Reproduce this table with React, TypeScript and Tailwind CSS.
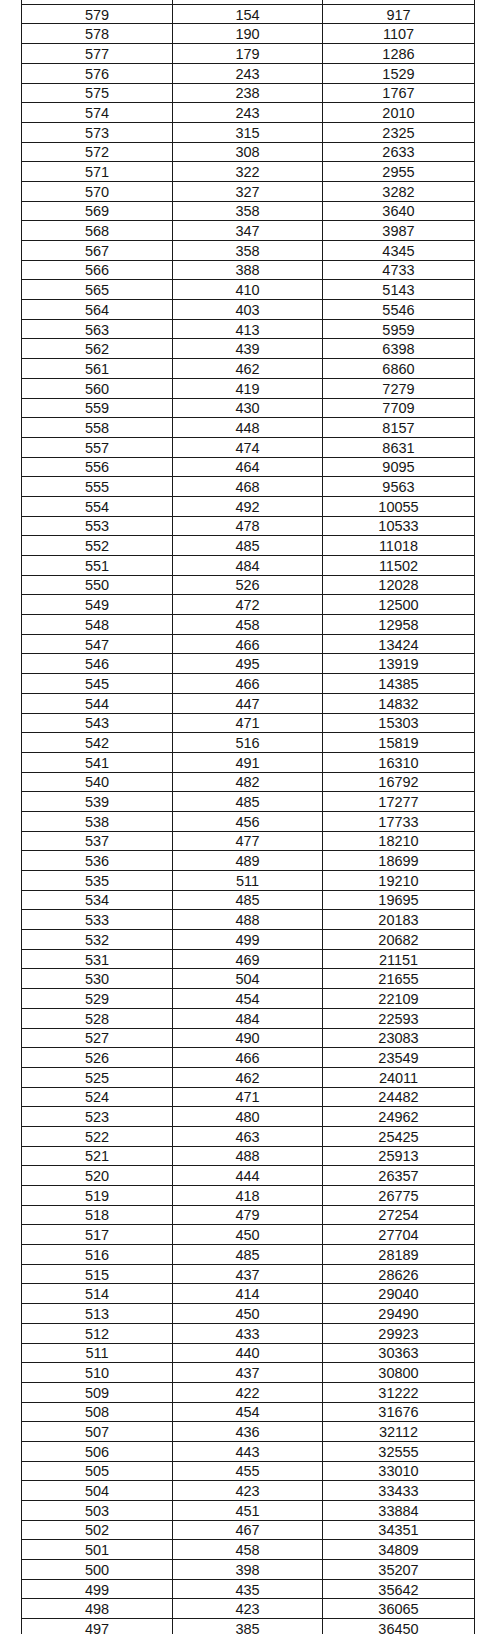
const rows: [number, number, number][] = [
  [580, 161, 763],
  [579, 154, 917],
  [578, 190, 1107],
  [577, 179, 1286],
  [576, 243, 1529],
  [575, 238, 1767],
  [574, 243, 2010],
  [573, 315, 2325],
  [572, 308, 2633],
  [571, 322, 2955],
  [570, 327, 3282],
  [569, 358, 3640],
  [568, 347, 3987],
  [567, 358, 4345],
  [566, 388, 4733],
  [565, 410, 5143],
  [564, 403, 5546],
  [563, 413, 5959],
  [562, 439, 6398],
  [561, 462, 6860],
  [560, 419, 7279],
  [559, 430, 7709],
  [558, 448, 8157],
  [557, 474, 8631],
  [556, 464, 9095],
  [555, 468, 9563],
  [554, 492, 10055],
  [553, 478, 10533],
  [552, 485, 11018],
  [551, 484, 11502],
  [550, 526, 12028],
  [549, 472, 12500],
  [548, 458, 12958],
  [547, 466, 13424],
  [546, 495, 13919],
  [545, 466, 14385],
  [544, 447, 14832],
  [543, 471, 15303],
  [542, 516, 15819],
  [541, 491, 16310],
  [540, 482, 16792],
  [539, 485, 17277],
  [538, 456, 17733],
  [537, 477, 18210],
  [536, 489, 18699],
  [535, 511, 19210],
  [534, 485, 19695],
  [533, 488, 20183],
  [532, 499, 20682],
  [531, 469, 21151],
  [530, 504, 21655],
  [529, 454, 22109],
  [528, 484, 22593],
  [527, 490, 23083],
  [526, 466, 23549],
  [525, 462, 24011],
  [524, 471, 24482],
  [523, 480, 24962],
  [522, 463, 25425],
  [521, 488, 25913],
  [520, 444, 26357],
  [519, 418, 26775],
  [518, 479, 27254],
  [517, 450, 27704],
  [516, 485, 28189],
  [515, 437, 28626],
  [514, 414, 29040],
  [513, 450, 29490],
  [512, 433, 29923],
  [511, 440, 30363],
  [510, 437, 30800],
  [509, 422, 31222],
  [508, 454, 31676],
  [507, 436, 32112],
  [506, 443, 32555],
  [505, 455, 33010],
  [504, 423, 33433],
  [503, 451, 33884],
  [502, 467, 34351],
  [501, 458, 34809],
  [500, 398, 35207],
  [499, 435, 35642],
  [498, 423, 36065],
  [497, 385, 36450],
  [496, 402, 36852],
];

// 점수별 인원 / 누적 인원 표
export default function App() {
  return (
    <div className="h-[1634px] w-[494px] overflow-hidden bg-white">
      <div className="-mt-[14.9px] ml-[21px] w-[454px] font-['Liberation_Sans',Arial,sans-serif] text-[14.5px] text-[#161616]">
        {rows.map(([score, count, total]) => (
          <div key={score} className="flex h-[19.7px] border-b border-[#1a1a1a]">
            <div className="flex w-[152px] items-center justify-center border-x border-[#1a1a1a] pt-[2.5px]">
              {score}
            </div>
            <div className="flex w-[150px] items-center justify-center border-r border-[#1a1a1a] pt-[2.5px]">
              {count}
            </div>
            <div className="flex w-[152px] items-center justify-center border-r border-[#1a1a1a] pt-[2.5px]">
              {total}
            </div>
          </div>
        ))}
      </div>
    </div>
  );
}
